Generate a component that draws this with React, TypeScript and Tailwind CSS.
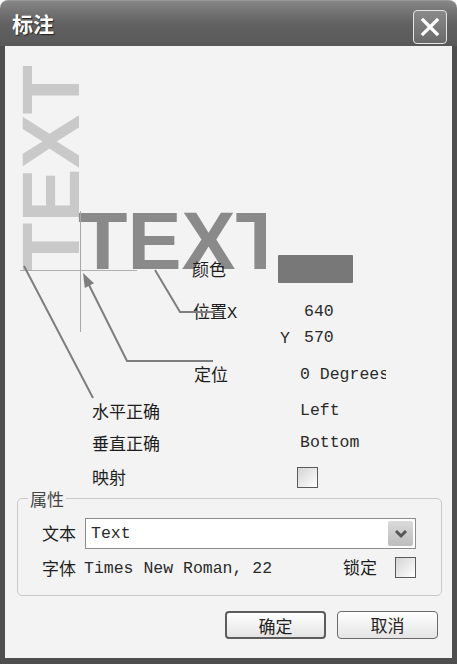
import React from 'react'

const cjk = "font-['Noto_Sans_CJK_SC',sans-serif]"
const mono = "font-['Liberation_Mono','Noto_Sans_CJK_SC',monospace]"

function CheckBox() {
  return (
    <div className="w-[21px] h-[21px] border border-[#5a5a5a] bg-gradient-to-br from-[#d4d4d4] to-[#ffffff]" />
  )
}

function Label({ children }: { children: React.ReactNode }) {
  return <span className={`${cjk} text-[17px] leading-[24px] text-[#1e1e1e]`}>{children}</span>
}

function Value({ children }: { children: React.ReactNode }) {
  return <span className={`${mono} text-[16.5px] leading-[24px] text-[#2a2a2a] whitespace-nowrap`}>{children}</span>
}

export default function App() {
  return (
    <div className="w-[457px] h-[664px] bg-white flex flex-col">
      {/* title bar */}
      <div className="h-[46px] rounded-t-[8px] bg-gradient-to-b from-[#858585] via-[#626262] to-[#585858] border-t border-[#9a9a9a] flex items-center justify-between pl-[12px] pr-[10px]">
        <span className={`${cjk} text-[21px] font-bold text-white [text-shadow:1px_1px_1px_#222]`}>标注</span>
        <div className="w-[34px] h-[34px] mt-[6px] rounded-[4px] border border-[#e4e4e4] bg-gradient-to-b from-[#8a8a8a] to-[#6a6a6a] flex items-center justify-center">
          <svg width="20" height="20" viewBox="0 0 20 20">
            <path d="M3 3 L17 17 M17 3 L3 17" stroke="#ffffff" strokeWidth="3.2" strokeLinecap="square" />
          </svg>
        </div>
      </div>

      {/* body */}
      <div className="flex-1 border-x-[5px] border-b-[6px] border-[#4e4e4e] bg-[#f3f3f3] relative flex flex-col">
        {/* diagram */}
        <span className="absolute left-[6.4px] top-[226px] -rotate-90 origin-top-left font-['Liberation_Sans',sans-serif] font-bold text-[81px] leading-[81px] text-[#c9c9c9] whitespace-nowrap">
          TEXT
        </span>
        <div className="absolute left-[73px] top-[155.4px] w-[188px] h-[81px] overflow-hidden">
          <span className="font-['Liberation_Sans',sans-serif] font-bold text-[81px] leading-[81px] text-[#8a8a8a] whitespace-nowrap">
            TEXT
          </span>
        </div>

        <div className="pt-[209px] relative z-10">
          <div className="flex items-center h-[28px] pl-[187px]">
            <div className="w-[86px]"><Label>颜色</Label></div>
            <div className="w-[75px] h-[28px] bg-[#787878] rounded-[1px]" />
          </div>
          <div className="flex items-center h-[24px] mt-[17px] pl-[188px]">
            <div className="w-[111px]"><Label>位置<span className={mono}>X</span></Label></div>
            <Value>640</Value>
          </div>
          <div className="flex items-center h-[24px] mt-[2px] pl-[275px]">
            <div className="w-[24px]"><Value>Y</Value></div>
            <Value>570</Value>
          </div>
          <div className="flex items-center h-[24px] mt-[12px] pl-[189px]">
            <div className="w-[106px]"><Label>定位</Label></div>
            <div className="w-[86px] overflow-hidden"><Value>0 Degrees</Value></div>
          </div>
          <div className="flex items-center h-[24px] mt-[13px] pl-[87px]">
            <div className="w-[208px]"><Label>水平正确</Label></div>
            <Value>Left</Value>
          </div>
          <div className="flex items-center h-[24px] mt-[8px] pl-[87px]">
            <div className="w-[208px]"><Label>垂直正确</Label></div>
            <Value>Bottom</Value>
          </div>
          <div className="flex items-center h-[24px] mt-[10px] pl-[87px]">
            <div className="w-[205px]"><Label>映射</Label></div>
            <CheckBox />
          </div>
        </div>

        <svg className="absolute left-0 top-0 z-20 pointer-events-none" width="447" height="450">
          <line x1="15" y1="224.5" x2="132" y2="224.5" stroke="#b0b0b0" strokeWidth="1" />
          <line x1="75.5" y1="165" x2="75.5" y2="286" stroke="#a8a8a8" strokeWidth="1" />
          <line x1="19" y1="220" x2="88" y2="352" stroke="#7e7e7e" strokeWidth="2" />
          <polyline points="83,237 122,315 208,315" fill="none" stroke="#7e7e7e" strokeWidth="2" />
          <polygon points="78,227 79.8,242 89,237.3" fill="#7e7e7e" />
          <polyline points="150,224 175,266 210,266" fill="none" stroke="#7e7e7e" strokeWidth="2" />
        </svg>

        {/* 属性 group */}
        <fieldset className="mt-[1px] ml-[12px] mr-[10px] border border-[#c9c9c9] rounded-[5px] pb-[17px] relative z-10">
          <legend className={`${cjk} ml-[10px] px-[2px] text-[17px] leading-[17px] text-[#444]`}>属性</legend>
          <div className="pt-[11px] pl-[24px] pr-[25px]">
            <div className="flex items-center">
              <div className="w-[43px]"><Label>文本</Label></div>
              <div className="flex-1 h-[31px] border border-[#8c8c8c] bg-white flex items-center justify-between pl-[5px] pr-[2px]">
                <Value>Text</Value>
                <div className="w-[25px] h-[25px] rounded-[2px] bg-gradient-to-b from-[#dadada] to-[#bdbdbd] flex items-center justify-center">
                  <svg width="14" height="10" viewBox="0 0 14 10">
                    <path d="M2 2 L7 7 L12 2" fill="none" stroke="#555" strokeWidth="3" />
                  </svg>
                </div>
              </div>
            </div>
            <div className="flex items-center h-[21px] mt-[8px]">
              <Label>字体</Label>
              <span className="ml-[8px]"><Value>Times New Roman, 22</Value></span>
              <div className="ml-auto mr-[18px]"><Label>锁定</Label></div>
              <CheckBox />
            </div>
          </div>
        </fieldset>

        <div className="flex justify-end gap-[11px] mt-[15px] pr-[14px]">
          <button className={`${cjk} w-[101px] h-[28px] rounded-[4px] border-2 border-[#5c5c5c] bg-gradient-to-b from-[#ffffff] to-[#e4e4e4] text-[17px] text-[#222]`}>确定</button>
          <button className={`${cjk} w-[101px] h-[28px] rounded-[4px] border border-[#6a6a6a] bg-gradient-to-b from-[#ffffff] to-[#e4e4e4] text-[17px] text-[#222]`}>取消</button>
        </div>
      </div>
    </div>
  )
}
